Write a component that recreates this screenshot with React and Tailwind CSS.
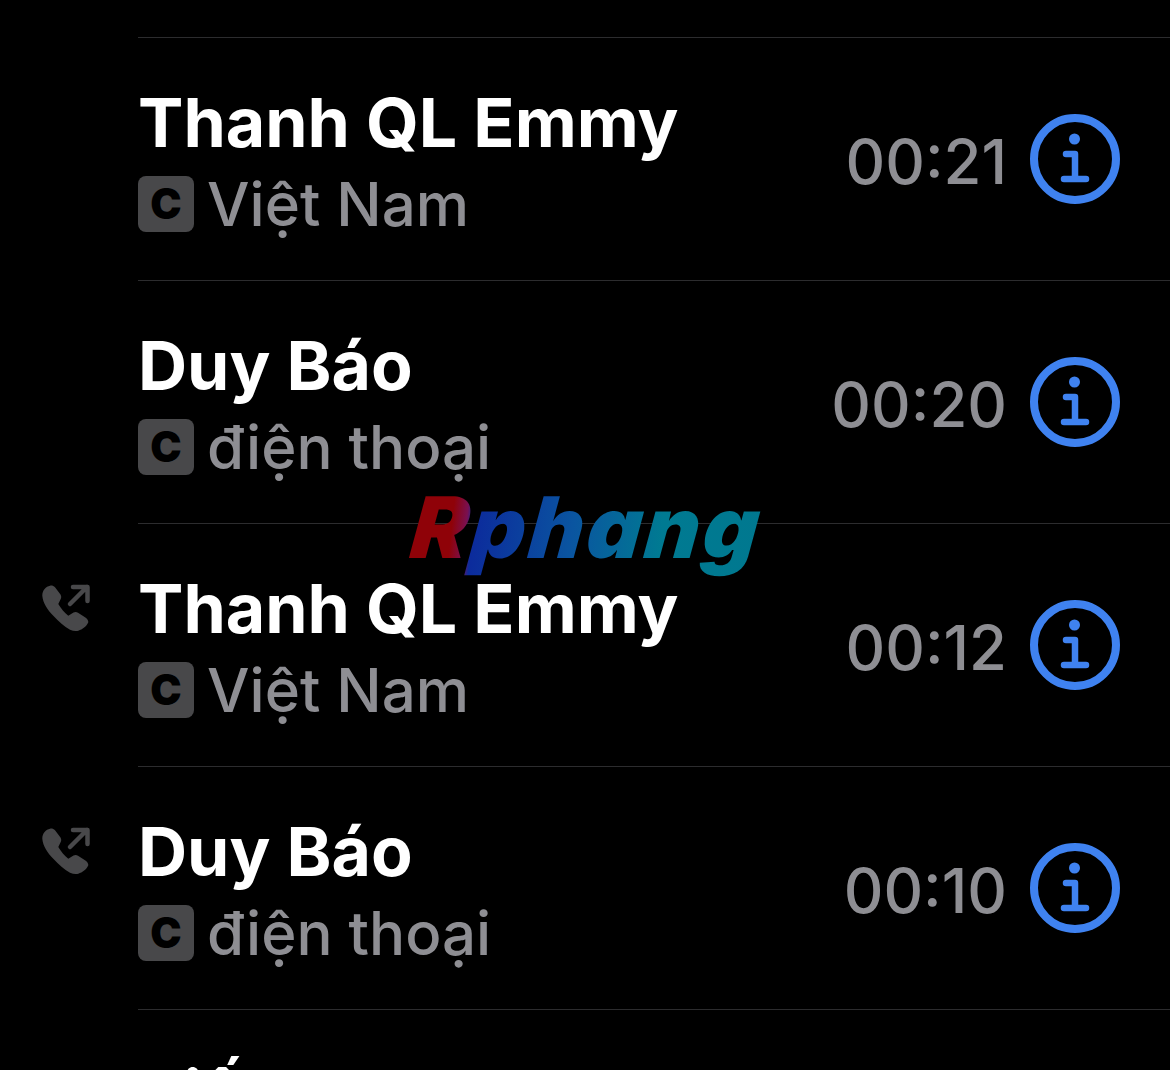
import React from 'react';

const calls = [
  { name: 'Thanh QL Emmy', label: 'Việt Nam', time: '00:21' },
  { name: 'Duy Báo', label: 'điện thoại', time: '00:20' },
  { name: 'Thanh QL Emmy', label: 'Việt Nam', time: '00:12', outgoing: true },
  { name: 'Duy Báo', label: 'điện thoại', time: '00:10', outgoing: true },
  { name: 'Tiến', label: 'di động', time: '00:08' },
];

function OutgoingIcon() {
  return (
    <svg width="52" height="52" viewBox="0 0 52 52" className="block">
      <path
        d="M10 2.7C6 3.5 2.3 7 2.3 12.7C3 20 7.5 27 13.3 32.7C19 38.5 24 43.5 30 46.7C33 48 36 48.3 38.3 47.7C42.5 46.5 46.5 43.5 48.3 39.3C48.5 37.5 47 35.5 45 34.3L38 29.8C36.5 28.8 35 28.8 33.5 29.6L28.3 32.7C24.5 30 21 25.5 18.3 21L20.7 16C21.5 14.5 21.3 13 20.5 11.5L15 4.3C13.5 2.8 11.8 2.3 10 2.7Z"
        fill="#48484a"
      />
      <path d="M30 21L47 4M33 4H47.5V18" fill="none" stroke="#48484a" strokeWidth="4.5" strokeLinecap="round" strokeLinejoin="round" />
    </svg>
  );
}

function InfoIcon() {
  return (
    <svg width="90" height="90" viewBox="0 0 90 90" className="block">
      <circle cx="45" cy="45" r="41" fill="none" stroke="#3f82f0" strokeWidth="8" />
      <circle cx="44.5" cy="25" r="5.5" fill="#3f82f0" />
      <path d="M36 40H45V65M34 65H56" fill="none" stroke="#3f82f0" strokeWidth="6.5" strokeLinecap="round" strokeLinejoin="round" />
    </svg>
  );
}

function Row({ call }) {
  return (
    <div className="flex h-[243px] shrink-0">
      <div className="w-[138px] shrink-0 pl-10 pt-[60px]">{call.outgoing && <OutgoingIcon />}</div>
      <div className="flex min-w-0 flex-1 items-center border-t border-[#2c2c2e] pr-[50px]">
        <div className="min-w-0 flex-1 pt-1.5">
          <div className="text-[68px] leading-[83px] font-bold tracking-[0px] text-white">{call.name}</div>
          <div className="flex items-center gap-[13px]">
            <span className="flex h-[56px] w-[56px] items-center justify-center rounded-[8px] bg-[#48484a] text-[42px] leading-none font-black text-black">
              C
            </span>
            <span className="text-[60px] leading-[80px] font-medium text-[#8e8e93]">{call.label}</span>
          </div>
        </div>
        <div className="flex items-center gap-[23px]">
          <span className="pt-[6px] text-[61.5px] font-medium text-[#8e8e93]">{call.time}</span>
          <InfoIcon />
        </div>
      </div>
    </div>
  );
}

export default function App() {
  return (
    <div className="relative flex h-[1070px] w-[1170px] flex-col overflow-hidden bg-black pt-[37px] font-[family-name:Inter,sans-serif]">
      {calls.map((call, i) => (
        <Row key={i} call={call} />
      ))}
      {/* watermark */}
      <div className="absolute top-[469px] left-[412px] -skew-x-6 bg-[linear-gradient(90deg,#8f0208_0%,#8f0208_11%,#7a1050_15%,#0c2b9c_17%,#0a55a0_45%,#007a92_70%,#00788f_100%)] bg-clip-text pr-2 text-[85px] leading-[118px] font-black tracking-[3px] text-transparent italic">
        Rphang
      </div>
    </div>
  );
}
